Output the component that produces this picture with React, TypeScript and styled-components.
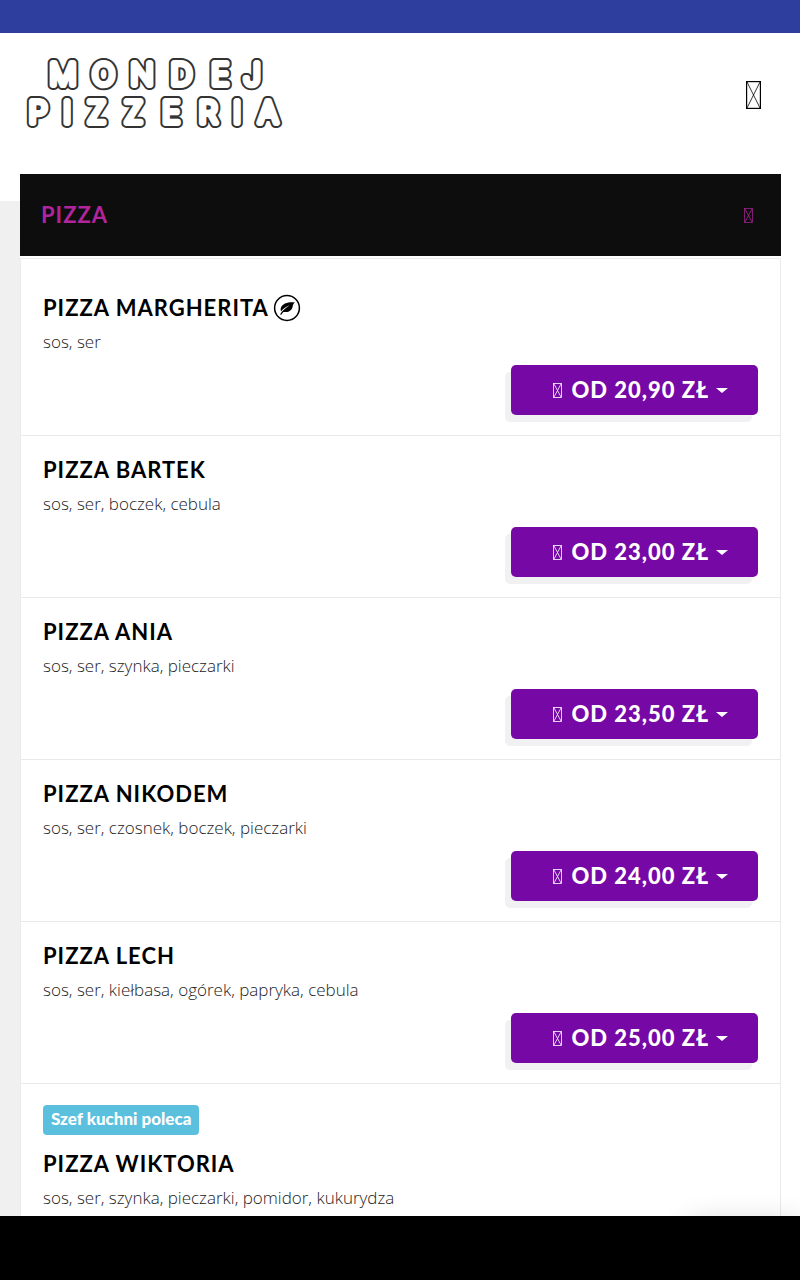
import React from "react";
import styled, { createGlobalStyle } from "styled-components";

const GlobalStyle = createGlobalStyle`
  *, *::before, *::after { box-sizing: border-box; }
  body {
    margin: 0;
    background: #ffffff;
    color: #000000;
    font-family: "Open Sans", "Noto Sans", sans-serif;
  }
  h1, h2, h3, p, ul { margin: 0; padding: 0; }
  button { font: inherit; cursor: pointer; }
`;

const displayFont = `"Lato", "Open Sans", sans-serif`;

const Page = styled.div`
  display: flex;
  flex-direction: column;
  height: 100vh;
`;

const TopBar = styled.div`
  flex: none;
  height: 33px;
  background: #2e3e9e;
`;

const Scroller = styled.div`
  flex: 1;
  min-height: 0;
  overflow-y: auto;
  scrollbar-width: none;
  background: linear-gradient(to right, #f0f0f0 20px, #ffffff 20px);
`;

const Header = styled.header`
  display: flex;
  align-items: flex-start;
  justify-content: space-between;
  height: 168px;
  padding: 20px 35px 0 20px;
  background: #ffffff;
`;

const LogoLink = styled.a`
  display: block;
  line-height: 0;
`;

const MenuToggle = styled.button`
  display: flex;
  padding: 4px;
  margin-top: 24px;
  border: 0;
  background: none;
  color: #000000;
`;

const Category = styled.section`
  margin: -27px 19px 0 20px;
`;

const CategoryHead = styled.button`
  display: flex;
  align-items: center;
  justify-content: space-between;
  width: 100%;
  height: 82px;
  padding: 0 28px 0 21px;
  border: 0;
  background: #0d0d0d;
  color: #b0249c;
`;

const CategoryName = styled.span`
  font: 700 22px/30px ${displayFont};
  letter-spacing: 1px;
`;

const Items = styled.ul`
  margin-top: 2px;
  padding-top: 15px;
  border: 1px solid #ebebeb;
  list-style: none;
  background: #ffffff;
`;

const Item = styled.li`
  display: flex;
  flex-direction: column;
  align-items: flex-start;
  padding: 19px 22px 20px;
  border-bottom: 1px solid #e9e9e9;
`;

const Badge = styled.span`
  height: 30px;
  margin: 2px 0 14px;
  padding: 0 8px;
  border-radius: 4px;
  background: #5bc0de;
  color: #ffffff;
  font: 900 17px/28px ${displayFont};
`;

const TitleLine = styled.div`
  display: flex;
  align-items: center;
  gap: 4px;
  height: 30px;
`;

const Title = styled.h3`
  font: 700 22px/30px ${displayFont};
  letter-spacing: 1px;
`;

const Ingredients = styled.p`
  margin-top: 6px;
  color: #222222;
  font-size: 17px;
  font-weight: 300;
  line-height: 26px;
`;

const PriceButton = styled.button`
  display: flex;
  align-items: center;
  justify-content: flex-end;
  align-self: flex-end;
  gap: 7px;
  min-width: 247px;
  height: 50px;
  margin-top: 10px;
  padding: 0 30px 0 40px;
  border: 0;
  border-radius: 5px;
  background: #7609a6;
  box-shadow: -6px 7px 0 #f1f0f3;
  color: #ffffff;
`;

const Price = styled.span`
  padding-left: 3px;
  font: 900 22px/30px ${displayFont};
  letter-spacing: 1px;
`;

const Caret = styled.span`
  border: 6px solid transparent;
  border-top: 5px solid currentColor;
  border-bottom: 0;
`;

const Footer = styled.footer`
  position: relative;
  flex: none;
  height: 64px;
`;

const CartShadow = styled.div`
  position: absolute;
  top: 8px;
  right: 0;
  width: 110px;
  height: 40px;
  box-shadow: 0 0 30px rgba(0, 0, 0, 0.2);
  clip-path: inset(-40px 0 0 -60px);
`;

const FooterBar = styled.div`
  position: relative;
  height: 100%;
  background: #000000;
`;

function BoxGlyph({ width, height, stroke = 1 }: { width: number; height: number; stroke?: number }) {
  return (
    <svg width={width} height={height} fill="none" stroke="currentColor" aria-hidden="true">
      <rect x=".5" y=".5" width={width - 1} height={height - 1} strokeWidth={stroke} />
      <path d={`M1 1L${width - 1} ${height - 1}M${width - 1} 1L1 ${height - 1}`} strokeWidth=".8" />
    </svg>
  );
}

function Logo() {
  return (
    <svg width="268" height="80" viewBox="20 53 268 80" role="img" aria-label="Mondej Pizzeria">
      <defs>
        <g
          id="wordmark"
          fontFamily="Inter, sans-serif"
          fontWeight="200"
          fontSize="30"
          textAnchor="middle"
          strokeLinejoin="round"
          strokeLinecap="round"
        >
          <text y="85" x="63 103.5 142 181.5 220 252">MONDEJ</text>
          <text y="123" x="38 67 96.5 133.5 171 208 237 268">PIZZERIA</text>
        </g>
      </defs>
      <use href="#wordmark" fill="#333" stroke="#333" strokeWidth="10" />
      <use href="#wordmark" fill="#fff" stroke="#fff" strokeWidth="6" />
    </svg>
  );
}

function VegeIcon() {
  return (
    <svg width="28" height="28" viewBox="0 0 28 28" role="img" aria-label="Wegetariańska">
      <circle cx="14" cy="14" r="12.4" fill="none" stroke="#000" strokeWidth="1.5" />
      <path d="M21.8 8.4C16 7.8 9 9.2 7.8 14.2c-.3 1.2-.1 2.2.4 3.1 2.2-2.7 5-4.8 8.5-6-3.5 2.2-7.3 5.2-9.7 9.1l1.3.4c.7-1.2 1.4-2.1 2.2-2.9 5.7 1.1 8.7-2.2 9.3-6 .2-1.5.8-2.7 2-3.5z" />
    </svg>
  );
}

interface Pizza {
  name: string;
  ingredients: string;
  price?: string;
  vege?: boolean;
  badge?: string;
}

const pizzas: Pizza[] = [
  { name: "PIZZA MARGHERITA", ingredients: "sos, ser", price: "20,90", vege: true },
  { name: "PIZZA BARTEK", ingredients: "sos, ser, boczek, cebula", price: "23,00" },
  { name: "PIZZA ANIA", ingredients: "sos, ser, szynka, pieczarki", price: "23,50" },
  { name: "PIZZA NIKODEM", ingredients: "sos, ser, czosnek, boczek, pieczarki", price: "24,00" },
  { name: "PIZZA LECH", ingredients: "sos, ser, kiełbasa, ogórek, papryka, cebula", price: "25,00" },
  {
    name: "PIZZA WIKTORIA",
    ingredients: "sos, ser, szynka, pieczarki, pomidor, kukurydza",
    badge: "Szef kuchni poleca",
  },
];

export default function App() {
  return (
    <Page>
      <GlobalStyle />
      <TopBar />
      <Scroller>
        <Header>
          <LogoLink href="#">
            <Logo />
          </LogoLink>
          <MenuToggle aria-label="Menu">
            <BoxGlyph width={15} height={28} stroke={1.4} />
          </MenuToggle>
        </Header>
        <Category>
          <CategoryHead aria-expanded="true">
            <CategoryName>PIZZA</CategoryName>
            <BoxGlyph width={9} height={15} stroke={0.7} />
          </CategoryHead>
          <Items>
            {pizzas.map((pizza) => (
              <Item key={pizza.name}>
                {pizza.badge && <Badge>{pizza.badge}</Badge>}
                <TitleLine>
                  <Title>{pizza.name}</Title>
                  {pizza.vege && <VegeIcon />}
                </TitleLine>
                <Ingredients>{pizza.ingredients}</Ingredients>
                {pizza.price && (
                  <PriceButton aria-haspopup="menu">
                    <BoxGlyph width={9} height={15} stroke={0.8} />
                    <Price>OD {pizza.price} ZŁ</Price>
                    <Caret />
                  </PriceButton>
                )}
              </Item>
            ))}
          </Items>
        </Category>
      </Scroller>
      <Footer>
        <CartShadow />
        <FooterBar />
      </Footer>
    </Page>
  );
}
